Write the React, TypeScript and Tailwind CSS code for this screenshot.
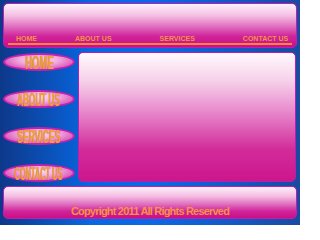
import React from "react";

const navItems = [
  { label: "HOME", ml: "ml-[12px]" },
  { label: "ABOUT US", ml: "ml-[38px]" },
  { label: "SERVICES", ml: "ml-[48px]" },
  { label: "CONTACT US", ml: "ml-[48px]" },
];

const sideItems = [
  { label: "HOME", sx: "scale-x-[0.5]" },
  { label: "ABOUT US", sx: "scale-x-[0.43]" },
  { label: "SERVICES", sx: "scale-x-[0.45]" },
  { label: "CONTACT US", sx: "scale-x-[0.39]" },
];

export default function App() {
  return (
    <div
      className="w-[300px] h-[225px] overflow-hidden flex flex-col px-[3px] pt-[3px] bg-[linear-gradient(to_right,#0d388a_0%,#0866e0_30%,#0a6ae6_50%,#1458c4_78%,#1a4a9e_100%)]"
      style={{ fontFamily: '"Liberation Sans", Arial, sans-serif' }}
    >
      {/* Header */}
      <div className="h-[45px] rounded-[5px] border border-[#c21cb6] bg-[linear-gradient(to_bottom,#fdf2fb_0%,#f4bce2_28%,#e070c0_52%,#d0249a_75%,#cc0e86_100%)] flex flex-col justify-end pb-[2px]">
        <div className="flex items-end text-[7px] font-bold text-[#f29444] leading-none whitespace-nowrap">
          {navItems.map((n) => (
            <span key={n.label} className={`${n.ml} whitespace-nowrap`}>
              {n.label}
            </span>
          ))}
        </div>
        <div className="mx-[4px] mt-[1px] h-[2px] bg-[#f2883a]" />
      </div>

      {/* Main */}
      <div className="mt-[4px] flex h-[130px]">
        <div className="w-[75px] flex flex-col gap-[19px] pt-[1px]">
          {sideItems.map((s) => (
            <div
              key={s.label}
              className="w-[72px] h-[18px] rounded-[50%] border-2 border-[#c81fb0] bg-[radial-gradient(ellipse_at_50%_35%,#fbe2f5_0%,#f2aade_40%,#dc5cbc_75%,#c41fa6_100%)] flex items-center justify-center overflow-visible"
            >
              <span
                className={`inline-block text-[19px] font-bold leading-none text-[#f2a03c] ${s.sx} whitespace-nowrap [text-shadow:0_0_1px_#c0603a]`}
              >
                {s.label}
              </span>
            </div>
          ))}
        </div>
        <div className="flex-1 mr-[1px] rounded-[5px] border border-[#b51fb4] bg-[linear-gradient(to_bottom,#fffafd_0%,#f6d0ea_22%,#e47cc6_50%,#d22c9a_75%,#cc168c_100%)]" />
      </div>

      {/* Footer */}
      <div className="mt-[4px] h-[33px] rounded-[5px] border border-[#c21cb6] bg-[linear-gradient(to_bottom,#fdf2fb_0%,#f4bce2_30%,#e070c0_55%,#d0249a_78%,#cc0e86_100%)] flex items-end justify-center pb-[1px]">
        <span className="text-[11px] font-bold leading-none tracking-[-0.8px] text-[#f49444]">
          Copyright 2011 All Rights Reserved
        </span>
      </div>
    </div>
  );
}
